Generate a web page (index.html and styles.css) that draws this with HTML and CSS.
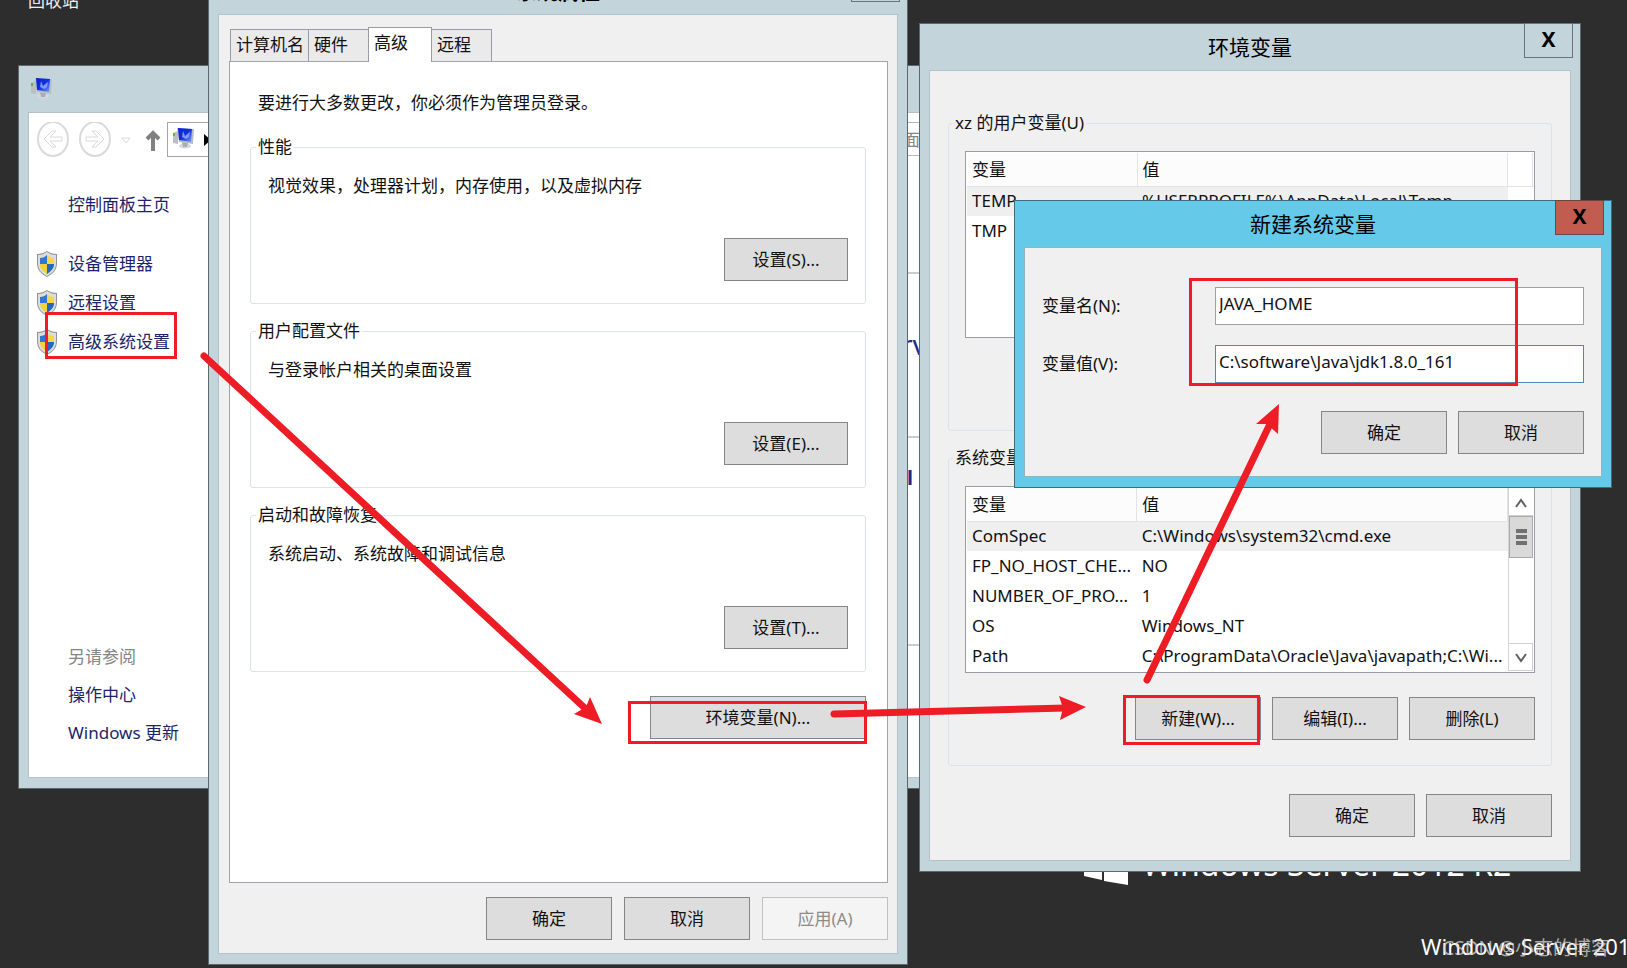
FILE: index.html
```html
<!DOCTYPE html>
<html lang="zh-CN">
<head>
<meta charset="utf-8">
<title>环境变量</title>
<link rel="stylesheet" href="styles.css">
</head>
<body>
<svg class="defs" width="0" height="0" aria-hidden="true">
  <defs>
    <linearGradient id="screen" x1="0" y1="0" x2="1" y2="1">
      <stop offset="0" stop-color="#0a1fd0"/><stop offset=".5" stop-color="#1230dc"/><stop offset="1" stop-color="#7d9df5"/>
    </linearGradient>
    <symbol id="pc" viewBox="0 0 22 22">
      <path d="M1 6l5-2v13l-5-1z" fill="#b9bfc4"/>
      <path d="M1 6h2v3H1z" fill="#62b33c"/>
      <ellipse cx="13" cy="19" rx="6" ry="2.5" fill="#d5d8da"/>
      <path d="M10 15l6 1-1 4h-4z" fill="#a9aeb3"/>
      <path d="M5 1l17 1-1 15-14-2z" fill="#b5bfca"/>
      <path d="M6 1l14 1-1 13-12-2z" fill="url(#screen)"/>
      <path d="M11 4l2 5 5-4-1 5-3 2-4-2z" fill="#a4c0ff" opacity=".7"/>
    </symbol>
    <symbol id="shield" viewBox="0 0 20 26">
      <path d="M10 0c3 2 6 3 10 3v9c0 7-4 11-10 14C4 23 0 19 0 12V3c4 0 7-1 10-3z" fill="#8f9492"/>
      <path d="M10 1c3 2 5 3 9 3v8c0 6-3 10-9 13-6-3-9-7-9-13V4c4 0 6-1 9-3z" fill="#dcdeda"/>
      <path d="M10 4v9H3V7c3 0 5-1 7-3z" fill="#2f78cf"/>
      <path d="M10 4v9h7V7c-3 0-5-1-7-3z" fill="#f7d648"/>
      <path d="M3 13h7v10c-4-3-7-5-7-10z" fill="#f5cf3c"/>
      <path d="M17 13h-7v10c4-3 7-5 7-10z" fill="#2368c0"/>
    </symbol>
  </defs>
</svg>

<main class="desktop">
  <span class="recycle">回收站</span>
  <div class="brand">
    <svg width="44" height="46" viewBox="0 0 44 46" aria-hidden="true"><path d="M0 6l18-2v18H0zM20 4l24-4v22H20zM0 24h18v17L0 37zM20 24h24v22l-24-4z" fill="#fff"/></svg>
    <span>Windows Server 2012 R2</span>
  </div>
  <span class="edition">Windows Server 2012 R2</span>

  <section class="window system">
    <header class="titlebar"><svg class="pc" aria-hidden="true"><use href="#pc"/></svg></header>
    <div class="client white">
      <nav class="toolbar">
        <svg width="140" height="36" viewBox="0 0 140 36" fill="none" stroke="#dadada" aria-hidden="true">
          <ellipse cx="24" cy="17" rx="15" ry="17" stroke-width="2"/>
          <path d="M15 17l8-8h4l-6 6h12v4H21l6 6h-4z"/>
          <ellipse cx="66" cy="17" rx="15" ry="17" stroke-width="2"/>
          <path d="M75 17l-8-8h-4l6 6H57v4h12l-6 6h4z"/>
          <path d="M93 16h8l-4 5z"/>
          <path d="M124 29V12M118 17l6-6 6 6" stroke="#808080" stroke-width="4"/>
        </svg>
        <div class="address"><svg class="pc" aria-hidden="true"><use href="#pc"/></svg><svg width="8" height="12" aria-hidden="true"><path d="M0 0l7 6-7 6z"/></svg></div>
        <div class="search">面板</div>
      </nav>
      <div class="split">
        <nav class="side">
          <a class="home" href="#">控制面板主页</a>
          <ul>
            <li><svg class="shield" aria-hidden="true"><use href="#shield"/></svg><a href="#">设备管理器</a></li>
            <li><svg class="shield" aria-hidden="true"><use href="#shield"/></svg><a href="#">远程设置</a></li>
            <li><svg class="shield" aria-hidden="true"><use href="#shield"/></svg><a href="#">高级系统设置</a></li>
          </ul>
          <div class="also">
            <span>另请参阅</span>
            <a href="#">操作中心</a>
            <a href="#">Windows 更新</a>
          </div>
        </nav>
        <div class="details">
          <div class="band first"></div>
          <div class="band second">rver</div>
          <div class="band third">l</div>
        </div>
      </div>
    </div>
  </section>

  <section class="window props">
    <header class="titlebar"><h2>系统属性</h2><button class="close" aria-label="关闭"></button></header>
    <div class="client">
      <div class="tabs" role="tablist">
        <button class="tab wide" role="tab">计算机名</button>
        <button class="tab" role="tab">硬件</button>
        <button class="tab active" role="tab" aria-selected="true">高级</button>
        <button class="tab" role="tab">远程</button>
      </div>
      <div class="panel">
        <p class="note">要进行大多数更改，你必须作为管理员登录。</p>
        <fieldset><legend>性能</legend><p>视觉效果，处理器计划，内存使用，以及虚拟内存</p><button class="btn">设置(S)...</button></fieldset>
        <fieldset><legend>用户配置文件</legend><p>与登录帐户相关的桌面设置</p><button class="btn">设置(E)...</button></fieldset>
        <fieldset><legend>启动和故障恢复</legend><p>系统启动、系统故障和调试信息</p><button class="btn">设置(T)...</button></fieldset>
        <button class="btn env-open">环境变量(N)...</button>
      </div>
      <footer class="actions"><button class="btn">确定</button><button class="btn">取消</button><button class="btn" disabled>应用(A)</button></footer>
    </div>
  </section>

  <section class="window env">
    <header class="titlebar"><h2>环境变量</h2><button class="close">X</button></header>
    <div class="client">
      <fieldset class="user"><legend>xz 的用户变量(U)</legend>
        <div class="list">
          <table>
            <thead><tr><th class="name">变量</th><th>值</th><th class="end"></th></tr></thead>
            <tbody>
              <tr class="selected"><td>TEMP</td><td>%USERPROFILE%\AppData\Local\Temp</td><td class="end"></td></tr>
              <tr><td>TMP</td><td></td><td></td></tr>
            </tbody>
          </table>
        </div>
      </fieldset>
      <fieldset class="machine"><legend>系统变量(S)</legend>
        <div class="list">
          <table>
            <thead><tr><th class="name">变量</th><th>值</th></tr></thead>
            <tbody>
              <tr class="selected"><td>ComSpec</td><td>C:\Windows\system32\cmd.exe</td></tr>
              <tr><td>FP_NO_HOST_CHE...</td><td>NO</td></tr>
              <tr><td>NUMBER_OF_PRO...</td><td>1</td></tr>
              <tr><td>OS</td><td>Windows_NT</td></tr>
              <tr><td>Path</td><td>C:\ProgramData\Oracle\Java\javapath;C:\Wi...</td></tr>
            </tbody>
          </table>
          <div class="scroll">
            <button aria-label="向上"><svg width="12" height="10"><path d="M1 9l5-7 5 7" fill="none" stroke="#606060" stroke-width="2"/></svg></button>
            <div class="thumb"><i></i><i></i><i></i></div>
            <button class="down" aria-label="向下"><svg width="12" height="10"><path d="M1 1l5 7 5-7" fill="none" stroke="#606060" stroke-width="2"/></svg></button>
          </div>
        </div>
        <div class="row"><button class="btn">新建(W)...</button><button class="btn">编辑(I)...</button><button class="btn">删除(L)</button></div>
      </fieldset>
      <footer class="actions"><button class="btn">确定</button><button class="btn">取消</button></footer>
    </div>
  </section>

  <section class="window create">
    <header class="titlebar"><h2>新建系统变量</h2><button class="close">X</button></header>
    <form class="client">
      <div class="field"><label for="vn">变量名(N):</label><input id="vn" type="text" value="JAVA_HOME"></div>
      <div class="field focus"><label for="vv">变量值(V):</label><input id="vv" type="text" value="C:\software\Java\jdk1.8.0_161"></div>
      <footer class="actions"><button type="button" class="btn">确定</button><button type="button" class="btn">取消</button></footer>
    </form>
  </section>

  <svg class="marks" width="1627" height="968" viewBox="0 0 1627 968" aria-hidden="true">
    <g fill="none" stroke="#ee1c25" stroke-width="3">
      <path d="M46.500 313.500h129v44h-129zM629.500 702.500h236v40h-236zM1124.500 696.500h134v47h-134zM1190.500 279.500h326v105h-326z"/>
      <g stroke-width="7" stroke-linecap="round"><path d="M204 356L588 711M834 714L1066 708M1147 680L1269 426"/></g>
    </g>
    <path fill="#ee1c25" d="M602 724l-12-27-4 10-12 7zM1086 707l-27-11 4 12-3 12zM1279 404l-23 20h11l11 10z"/>
  </svg>
  <span class="watermark">CSDN @小志的博客</span>
</main>
</body>
</html>
```
FILE: styles.css
```css
* { box-sizing: border-box; }
body, h2, p, ul { margin: 0; padding: 0; }
body {
  font: 17px/24px "Noto Sans", "Noto Sans CJK SC", sans-serif;
  color: #111;
  background: #2d2d2d;
}
button, input { font: inherit; color: inherit; margin: 0; }
a { color: #1b2468; text-decoration: none; }
ul { list-style: none; }
.defs { position: absolute; }

.desktop { position: relative; height: 100vh; overflow: hidden; }
.recycle { position: absolute; left: 28px; top: -11px; color: #eee; }
.brand {
  position: absolute; left: 1084px; top: 839px;
  display: flex; gap: 14px;
  color: #fff; font-size: 32px; line-height: 50px; white-space: nowrap;
}
.edition {
  position: absolute; left: 1421px; top: 930px;
  color: #fff; font-size: 22px; line-height: 32px; white-space: nowrap;
}
.watermark {
  position: absolute; right: 17px; bottom: 8px;
  color: rgba(215, 215, 215, .75); font-size: 19px; white-space: nowrap;
}
.marks { position: absolute; left: 0; top: 0; pointer-events: none; }

/* windows */
.window {
  position: absolute;
  display: flex; flex-direction: column;
  padding: 0 9px 10px;
  background: #c3d5db;
  border: 1px solid #5d676c;
}
.titlebar { position: relative; flex: none; height: 46px; text-align: center; }
.titlebar h2 { font-size: 21px; line-height: 46px; font-weight: 400; color: #000; }
.close {
  position: absolute; right: -2px; top: -1px;
  width: 49px; height: 35px; padding: 0 0 4px;
  background: #c3d5db; border: 1px solid #65757b;
  font-weight: 700; font-size: 21px; line-height: 28px; color: #000;
}
.client {
  flex: 1; min-height: 0;
  display: flex; flex-direction: column;
  background: #f0f0f0; border: 1px solid #b5c1c8;
}
.client.white { background: #fff; }
.btn {
  width: 126px; height: 43px; padding: 0;
  background: #ddd; border: 1px solid #858585;
}
.btn:disabled { color: #8b8b8b; background: #f4f4f4; border-color: #bfc2c4; }
.actions, .row { display: flex; justify-content: flex-end; gap: 11px; }
fieldset {
  margin: 0; padding: 0; min-width: 0;
  border: 1px solid #dbe4e9; border-radius: 3px;
}
legend { margin-left: 5px; padding: 0 2px; }

/* system control panel */
.system { left: 18px; top: 65px; width: 1100px; height: 724px; }
.pc { width: 22px; height: 22px; }
.system .titlebar { display: flex; padding: 11px 2px; }
.toolbar { display: flex; padding: 9px 0 0; height: 46px; }
.address {
  display: flex; align-items: center; gap: 10px;
  width: 720px; height: 35px; padding-left: 4px;
  margin-left: -2px; border: 1px solid #a5a5a5;
}
.address .pc { margin-top: -4px; }
.search {
  flex: 1; height: 34px; padding: 5px 0 0 10px; margin-left: 5px;
  border: 1px solid #b5b5b5; color: #858585;
}
.split { flex: 1; display: flex; }
.side { width: 872px; display: flex; flex-direction: column; padding: 34px 0 32px 8px; }
.home { padding-left: 31px; }
.side ul { padding-top: 33px; display: grid; gap: 12px; }
.side li { display: flex; align-items: center; gap: 11px; height: 27px; }
.shield { width: 20px; height: 26px; }
.also { margin-top: auto; padding-left: 31px; display: grid; gap: 14px; justify-items: start; }
.also span { color: #858585; }
.details { flex: 1; }
.band { border-bottom: 2px solid #ccc; color: #1b2c8c; font-size: 28px; }
.first { height: 115px; }
.second { height: 164px; padding-top: 58px; }
.third { height: 208px; padding: 28px 0 0 6px; font-size: 20px; font-weight: 700; }

/* system properties */
.props { left: 208px; top: -33px; width: 700px; height: 998px; }
.props .titlebar h2 { font-weight: 700; }
.props .client { padding: 13px 9px 13px 10px; }
.tabs { display: flex; align-items: flex-end; padding-left: 1px; height: 33px; }
.tab {
  width: 61px; height: 32px; padding: 0 5px 1px; text-align: left;
  background: #eaeaea; border: 1px solid #999ca5; border-bottom: 0; margin-right: -1px;
}
.wide { width: 79px; white-space: nowrap; }
.tab.active { position: relative; width: 64px; height: 35px; margin-bottom: -1px; background: #fff; padding-bottom: 4px; }
.panel {
  flex: 1; display: flex; flex-direction: column;
  padding: 29px 21px 0 20px; background: #fff; border: 1px solid #a0a3ab;
}
.note { padding-left: 8px; margin-bottom: 20px; }
.panel fieldset { height: 169px; margin-bottom: 15px; padding: 15px 17px 0; display: flex; flex-direction: column; }
.panel legend { margin-left: -12px; }
.panel fieldset .btn { width: 124px; margin-top: 40px; align-self: flex-end; }
.env-open.btn { width: 216px; align-self: flex-end; margin-top: 9px; flex: none; }
.props .actions { margin-top: 14px; gap: 12px; }

/* environment variables */
.env { left: 919px; top: 23px; width: 662px; height: 849px; }
.env .client { padding: 40px 18px 0; }
.env fieldset { padding: 16px 16px 0; border-color: #dce4e9; }
.user { height: 320px; margin-bottom: 15px; }
.env legend { margin-left: -12px; }
.machine { height: 320px; }
.list { display: flex; height: 187px; padding: 1px; background: #fff; border: 1px solid #989da5; }
.list table { flex: 1; table-layout: fixed; border-collapse: collapse; height: min-content; }
.list th {
  height: 33px; padding: 1px 5px 0; text-align: left; font-weight: 400;
  background: #fcfcfc; border-right: 1px solid #e3e3e3; border-bottom: 1px solid #e3e3e3;
}
.list .name { width: 170px; }
.list .end { width: 25px; background: #fff; }
.list td { height: 30px; padding: 0 5px; white-space: nowrap; }
.selected td { background: #efefef; }
.scroll { width: 25px; display: flex; flex-direction: column; border-left: 1px solid #d5d5d5; }
.scroll button { height: 28px; padding: 0; background: #fff; border: 0; border-bottom: 1px solid #d0d0d0; }
.scroll .down { margin-top: auto; border: 1px solid #d0d0d0; border-left: 0; }
.thumb {
  height: 42px; display: flex; flex-direction: column; align-items: center; justify-content: center; gap: 2px;
  background: #d9d9d9; border: 1px solid #aaa;
}
.thumb i { width: 11px; height: 4px; background: #707070; }
.machine .row { margin-top: 24px; }
.env .actions { margin-top: 28px; }

/* new system variable */
.create { left: 1014px; top: 200px; width: 598px; height: 288px; background: #65c9ea; border-color: #3d6e80; }
.create .close { background: #c25b50; border-color: #6c4744; }
.create .client { padding: 39px 17px 0; border-color: #8fb5c3; }
.field { display: flex; align-items: center; margin-bottom: 20px; }
.field label { width: 173px; }
.field input {
  flex: 1; min-width: 0; height: 38px; padding: 0 3px 6px;
  background: #fff; border: 1px solid #a0a0a0; border-radius: 0; outline: 0;
}
.focus input { border-color: #5586ac; }
.create .actions { margin-top: 8px; }
```
